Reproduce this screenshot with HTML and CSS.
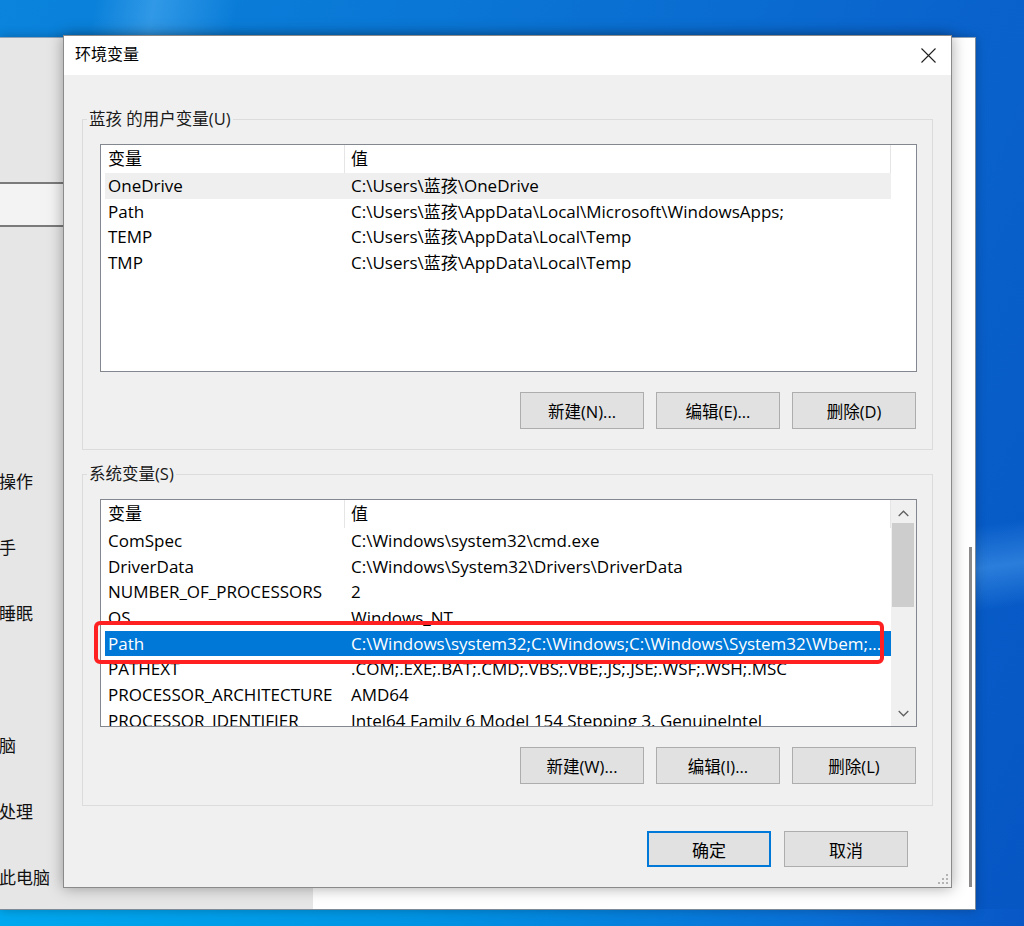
FILE: index.html
```html
<!DOCTYPE html>
<html lang="zh-CN">
<head>
<meta charset="utf-8">
<title>环境变量</title>
<link rel="stylesheet" href="styles.css">
</head>
<body>
<div class="desktop">
  <div class="bgwin">
    <nav class="nav">
      <div class="search"></div>
      <ul class="navlist">
        <li class="blank"></li>
        <li class="blank"></li>
        <li>通知和操作</li>
        <li>专注助手</li>
        <li>电源和睡眠</li>
        <li class="blank"></li>
        <li>平板电脑</li>
        <li>多任务处理</li>
        <li>投影到此电脑</li>
      </ul>
    </nav>
    <div class="content"><div class="vscroll"></div></div>
  </div>

  <div class="dialog">
    <div class="titlebar">
      <span class="title">环境变量</span>
      <span class="close">
        <svg width="15" height="15" viewBox="0 0 15 15"><path d="M0.5 0.5 L14.5 14.5 M14.5 0.5 L0.5 14.5" stroke="#1f1f1f" stroke-width="1.1" fill="none"/></svg>
      </span>
    </div>
    <div class="dbody">
      <fieldset class="group">
        <legend>蓝孩 的用户变量(U)</legend>
        <div class="list">
          <div class="rows">
            <div class="row head"><span class="c1">变量</span><span class="c2">值</span></div>
            <div class="row hover"><span class="c1">OneDrive</span><span class="c2">C:\Users\蓝孩\OneDrive</span></div>
            <div class="row"><span class="c1">Path</span><span class="c2">C:\Users\蓝孩\AppData\Local\Microsoft\WindowsApps;</span></div>
            <div class="row"><span class="c1">TEMP</span><span class="c2">C:\Users\蓝孩\AppData\Local\Temp</span></div>
            <div class="row"><span class="c1">TMP</span><span class="c2">C:\Users\蓝孩\AppData\Local\Temp</span></div>
          </div>
        </div>
        <div class="btnrow">
          <button class="btn">新建(N)...</button>
          <button class="btn">编辑(E)...</button>
          <button class="btn">删除(D)</button>
        </div>
      </fieldset>

      <fieldset class="group group2">
        <legend>系统变量(S)</legend>
        <div class="listwrap">
          <div class="list">
            <div class="rows">
              <div class="row head"><span class="c1">变量</span><span class="c2">值</span></div>
              <div class="row"><span class="c1">ComSpec</span><span class="c2">C:\Windows\system32\cmd.exe</span></div>
              <div class="row"><span class="c1">DriverData</span><span class="c2">C:\Windows\System32\Drivers\DriverData</span></div>
              <div class="row"><span class="c1">NUMBER_OF_PROCESSORS</span><span class="c2">2</span></div>
              <div class="row"><span class="c1">OS</span><span class="c2">Windows_NT</span></div>
              <div class="row selected"><span class="c1">Path</span><span class="c2">C:\Windows\system32;C:\Windows;C:\Windows\System32\Wbem;...</span></div>
              <div class="row"><span class="c1">PATHEXT</span><span class="c2">.COM;.EXE;.BAT;.CMD;.VBS;.VBE;.JS;.JSE;.WSF;.WSH;.MSC</span></div>
              <div class="row"><span class="c1">PROCESSOR_ARCHITECTURE</span><span class="c2">AMD64</span></div>
              <div class="row"><span class="c1">PROCESSOR_IDENTIFIER</span><span class="c2">Intel64 Family 6 Model 154 Stepping 3, GenuineIntel</span></div>
            </div>
            <div class="scrollbar">
              <div class="arrow up"><svg width="11" height="7" viewBox="0 0 11 7"><path d="M0.7 6 L5.5 1.2 L10.3 6" stroke="#606060" stroke-width="1.3" fill="none"/></svg></div>
              <div class="thumb"></div>
              <div class="track"></div>
              <div class="arrow down"><svg width="11" height="7" viewBox="0 0 11 7"><path d="M0.7 1 L5.5 5.8 L10.3 1" stroke="#606060" stroke-width="1.3" fill="none"/></svg></div>
            </div>
          </div>
          <div class="annot"></div>
        </div>
        <div class="btnrow">
          <button class="btn">新建(W)...</button>
          <button class="btn">编辑(I)...</button>
          <button class="btn">删除(L)</button>
        </div>
      </fieldset>

      <div class="okrow">
        <button class="btn primary">确定</button>
        <button class="btn">取消</button>
      </div>
    </div>
    <svg class="grip" width="11" height="11" viewBox="0 0 11 11">
      <rect x="8" y="0" width="2" height="2" fill="#b4b4b4"/>
      <rect x="4" y="4" width="2" height="2" fill="#b4b4b4"/>
      <rect x="8" y="4" width="2" height="2" fill="#b4b4b4"/>
      <rect x="0" y="8" width="2" height="2" fill="#b4b4b4"/>
      <rect x="4" y="8" width="2" height="2" fill="#b4b4b4"/>
      <rect x="8" y="8" width="2" height="2" fill="#b4b4b4"/>
    </svg>
  </div>
</div>
</body>
</html>
```
FILE: styles.css
```css
* { box-sizing: border-box; }
html, body { margin: 0; padding: 0; }
body {
  width: 1024px;
  height: 926px;
  overflow: hidden;
  font-family: "Open Sans", "Noto Sans CJK SC", sans-serif;
  font-size: 16px;
  color: #000;
}

.desktop {
  position: relative;
  width: 1024px;
  height: 926px;
  overflow: hidden;
  background:
    linear-gradient(100deg, rgba(255,255,255,0) 8%, rgba(120,200,255,0.35) 13%, rgba(255,255,255,0) 20%),
    linear-gradient(172deg, rgba(255,255,255,0) 62%, rgba(110,190,255,0.35) 66%, rgba(255,255,255,0) 70%),
    linear-gradient(115deg, #0a84dc 0%, #0a74d4 35%, #0a64cd 65%, #0656c4 100%);
}
.desktop::after {
  content: "";
  position: absolute;
  left: 0; right: 0; bottom: 0;
  height: 17px;
  background: linear-gradient(90deg, #00a8ef 0%, #0094e4 40%, #0a6fd6 80%, #0857c6 100%);
}

/* background settings window */
.bgwin {
  position: absolute;
  left: 0;
  top: 37px;
  width: 976px;
  height: 873px;
  display: flex;
  border-top: 1px solid #8fa3b8;
  border-right: 1px solid #7d8a98;
  border-bottom: 1px solid #7d8a98;
  box-shadow: 0 0 10px rgba(0,0,0,0.25);
  z-index: 1;
}
.nav {
  width: 313px;
  background: #e6e6e6;
  overflow: hidden;
  padding-top: 144px;
}
.search {
  margin-left: -20px;
  width: 300px;
  height: 45px;
  border: 2px solid #7a7a7a;
  background: #f3f3f3;
}
.navlist {
  list-style: none;
  margin: 89px 0 0 0;
  padding: 0;
}
.navlist li {
  height: 66px;
  line-height: 66px;
  font-size: 17px;
  margin-left: -52px;
  white-space: nowrap;
  font-family: "Noto Sans CJK SC", sans-serif;
  color: #111;
}
.content {
  flex: 1;
  background: #fff;
  display: flex;
  justify-content: flex-end;
  align-items: flex-start;
  padding: 509px 3px 0 0;
}
.vscroll {
  width: 3px;
  height: 340px;
  background: #8a8a8a;
}

/* dialog */
.dialog {
  position: absolute;
  left: 63px;
  top: 35px;
  width: 889px;
  border: 1px solid #8a8a8a;
  background: #f0f0f0;
  box-shadow: 0 0 14px rgba(0,0,0,0.35);
  z-index: 2;
}
.titlebar {
  height: 39px;
  background: #fff;
  display: flex;
  align-items: center;
  justify-content: space-between;
  padding-left: 11px;
}
.title {
  font-size: 16px;
  line-height: 20px;
  padding-bottom: 5px;
  font-family: "Noto Sans CJK SC", sans-serif;
  color: #000;
}
.close {
  width: 46px;
  height: 39px;
  display: flex;
  align-items: center;
  justify-content: center;
  padding-bottom: 1px;
}
.dbody {
  padding: 33px 18px 20px 18px;
}

.group {
  margin: 0;
  min-width: 0;
  border: 1px solid #dcdcdc;
  padding: 14px 15px 20px 6px;
}
.group2 {
  margin-top: 13px;
  padding-bottom: 21px;
}
.group legend {
  padding: 0 2px;
  margin-left: -2px;
  line-height: 22px;
  font-size: 16.5px;
  color: #1a1a1a;
}

.listwrap {
  position: relative;
  margin-left: 11px;
}
.group > .list { margin-left: 11px; }
.list {
  height: 228px;
  border: 1px solid #828790;
  background: #fff;
  overflow: hidden;
  display: flex;
  padding-left: 4px;
}
.rows {
  width: 786px;
  overflow: hidden;
  font-size: 17px;
}
.row {
  display: flex;
  height: 25.7px;
  line-height: 25.7px;
  white-space: nowrap;
}
.row.head {
  height: 28px;
  line-height: 28px;
}
.row .c1 {
  width: 240px;
  flex: none;
  padding-left: 3px;
  overflow: hidden;
}
.row .c2 {
  flex: 1;
  padding-left: 6px;
  overflow: hidden;
}
.row.head .c1 { border-right: 1px solid #e5e5e5; }
.row.head .c2 { border-right: 1px solid #e5e5e5; }
.row.hover { background: #efefef; }
.row.selected { background: #0078d7; color: #fff; }

.scrollbar {
  width: 25px;
  flex: none;
  background: #f0f0f0;
  display: flex;
  flex-direction: column;
}
.arrow {
  height: 23px;
  display: flex;
  justify-content: center;
  align-items: center;
}
.arrow.up { padding-top: 4px; }
.arrow.down { padding-bottom: 2px; }
.thumb {
  height: 84px;
  margin: 0 2px 0 1px;
  background: #cdcdcd;
}
.track { flex: 1; }

.annot {
  position: absolute;
  left: -6px;
  top: 122px;
  width: 790px;
  height: 43px;
  border: 4px solid #ff2121;
  border-radius: 6px;
}

.btnrow {
  display: flex;
  justify-content: flex-end;
  gap: 12px;
  margin-top: 20px;
  padding-right: 1px;
}
.btn {
  width: 124px;
  height: 37px;
  margin: 0;
  padding: 0;
  background: #e1e1e1;
  border: 1px solid #adadad;
  font-family: "Open Sans", "Noto Sans CJK SC", sans-serif;
  font-size: 16.5px;
  color: #000;
}
.btn.primary {
  border: 2px solid #0078d7;
}
.okrow {
  display: flex;
  justify-content: flex-end;
  gap: 13px;
  margin-top: 25px;
  padding-right: 25px;
}
.okrow .btn { height: 36px; font-size: 17px; }

.grip {
  position: absolute;
  right: 2px;
  bottom: 2px;
}
```
